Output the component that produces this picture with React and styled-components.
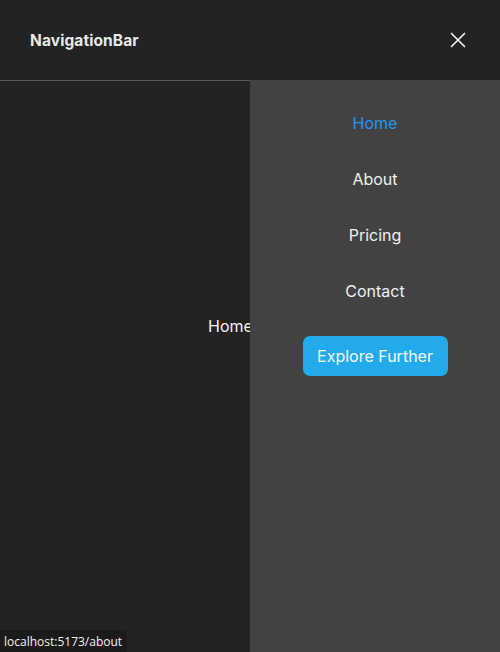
import React from 'react'
import styled, { createGlobalStyle } from 'styled-components'

const Global = createGlobalStyle`
    html, body {
        margin: 0;
        padding: 0;
        background: #232323;
        font-family: "Inter", "Noto Sans", sans-serif;
    }
`;

const Page = styled.div`
    position: relative;
    width: 500px;
    height: 652px;
    overflow: hidden;
    background: #232323;
    color: #f2f2f2;
`;

const Header = styled.header`
    height: 81px;
    box-sizing: border-box;
    padding: 0 33px 0 30px;
    display: flex;
    align-items: center;
    justify-content: space-between;
    border-bottom: 1px solid #5a5a5a;
`;

const Brand = styled.div`
    font-size: 15.5px;
    font-weight: 700;
    color: #e8e8e8;
    letter-spacing: 0.1px;
`;

const CloseButton = styled.button`
    background: none;
    border: none;
    padding: 0;
    width: 18px;
    height: 18px;
    display: flex;
    align-items: center;
    justify-content: center;
    color: #f0f0f0;
    cursor: pointer;
`;

const Main = styled.main`
    height: 489px;
    display: flex;
    align-items: center;
    padding-left: 208px;
`;

const MainText = styled.div`
    font-size: 16px;
    color: #f4f4f4;
`;

const Drawer = styled.nav`
    position: absolute;
    top: 80px;
    left: 250px;
    right: 0;
    bottom: 0;
    background: #424242;
    display: flex;
    flex-direction: column;
    align-items: center;
    box-sizing: border-box;
`;

const NavList = styled.div`
    padding-top: 32px;
    display: flex;
    flex-direction: column;
    align-items: center;
`;

const NavLink = styled.a`
    height: 56px;
    line-height: 22px;
    font-size: 16px;
    color: ${({ $active }) => ($active ? '#2196f3' : '#f0f0f0')};
    text-decoration: none;
`;

const Explore = styled.button`
    margin-top: 0;
    width: 145px;
    height: 40px;
    border: none;
    border-radius: 7px;
    background: #22aaea;
    color: #f5f9fc;
    font-family: inherit;
    font-size: 16px;
    cursor: pointer;
`;

const StatusBar = styled.div`
    position: absolute;
    left: 0;
    bottom: 0;
    height: 22px;
    padding: 0 5px 0 4px;
    display: flex;
    align-items: center;
    background: #1b1b1b;
    border-top-right-radius: 3px;
    color: #f0f0f0;
    font-family: "Open Sans", sans-serif;
    font-size: 12px;
`;

const links = ['Home', 'About', 'Pricing', 'Contact']

export default function App() {
    return (
        <Page>
            <Global />
            <Header>
                <Brand>NavigationBar</Brand>
                <CloseButton aria-label="Close">
                    <svg width="16" height="16" viewBox="0 0 16 16" fill="none" stroke="currentColor" strokeWidth="1.7" strokeLinecap="round">
                        <path d="M1.5 1.5 L14.5 14.5 M14.5 1.5 L1.5 14.5" />
                    </svg>
                </CloseButton>
            </Header>
            <Main>
                <MainText>Home</MainText>
            </Main>
            <Drawer>
                <NavList>
                    {links.map((l, i) => (
                        <NavLink key={l} href="#" $active={i === 0}>{l}</NavLink>
                    ))}
                </NavList>
                <Explore>Explore Further</Explore>
            </Drawer>
            <StatusBar>localhost:5173/about</StatusBar>
        </Page>
    )
}
